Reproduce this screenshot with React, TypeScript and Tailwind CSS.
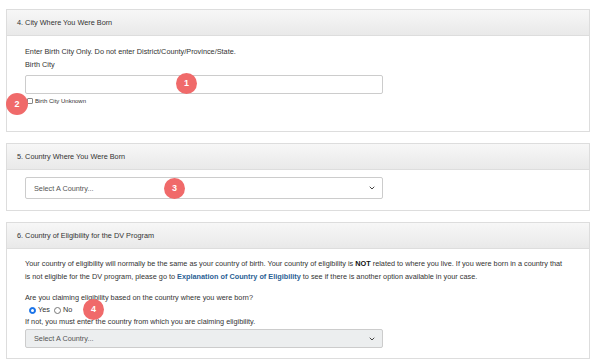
import { ChevronDown } from 'lucide-react'

function Badge({ n, className }: { n: number; className: string }) {
  return (
    <div
      className={`absolute w-[21px] h-[21px] rounded-full bg-[#f06a6a] text-white text-[9px] font-bold flex items-center justify-center ${className}`}
    >
      {n}
    </div>
  )
}

function Panel({ title, children, className = '' }: { title: string; children: React.ReactNode; className?: string }) {
  return (
    <div className={`relative border border-[#dddddd] bg-white ${className}`}>
      <div className="h-[26px] flex items-center px-[10px] bg-gradient-to-b from-[#f7f7f7] to-[#e9e9e9] border-b border-[#dddddd] text-[#333333]">
        {title}
      </div>
      {children}
    </div>
  )
}

function Select({ disabled = false }: { disabled?: boolean }) {
  return (
    <div
      className={`w-[358px] flex items-center justify-between pl-[8px] pr-[6px] border border-[#cccccc] rounded-[2px] text-[#555555] ${
        disabled ? 'h-[19px] bg-[#eceeef]' : 'h-[22px] bg-white'
      }`}
    >
      <span>Select A Country...</span>
      <ChevronDown className="w-[8px] h-[8px] text-[#444444]" strokeWidth={3} />
    </div>
  )
}

export default function App() {
  return (
    <div className="w-[600px] h-[360px] overflow-hidden bg-white pl-[6px] pr-[10px] pt-[9px] text-[7.3px] leading-[13px] text-[#333333] [font-family:'Liberation_Sans',Arial,sans-serif]">
      {/* 4. City */}
      <Panel title="4. City Where You Were Born" className="h-[123px]">
        <div className="pl-[18px] pt-[9px]">
          <p>Enter Birth City Only. Do not enter District/County/Province/State.</p>
          <p>Birth City</p>
          <div className="mt-[4px] w-[358px] h-[19px] border border-[#cccccc] rounded-[2px] bg-white" />
          <label className="mt-[2px] flex items-center gap-[2px] pl-[2px] text-[6px] leading-[10px]">
            <span className="w-[6px] h-[6px] border border-[#888888] rounded-[1px] bg-white" />
            Birth City Unknown
          </label>
        </div>
        <Badge n={1} className="left-[169px] top-[63px]" />
        <Badge n={2} className="left-[-1px] top-[83px] w-[22px] h-[22px]" />
      </Panel>

      {/* 5. Country */}
      <Panel title="5. Country Where You Were Born" className="mt-[11px] h-[68px]">
        <div className="pl-[18px] pt-[7px]">
          <Select />
        </div>
        <Badge n={3} className="left-[157px] top-[34px]" />
      </Panel>

      {/* 6. Eligibility */}
      <Panel title="6. Country of Eligibility for the DV Program" className="mt-[11px] h-[137px]">
        <div className="pl-[18px] pr-[24px] pt-[8px]">
          <p>
            Your country of eligibility will normally be the same as your country of birth. Your country of eligibility is{' '}
            <b className="text-[#111111]">NOT</b> related to where you live. If you were born in a country that is not eligible
            for the DV program, please go to{' '}
            <a className="font-bold text-[#2b5f94]">Explanation of Country of Eligibility</a> to see if there is another option
            available in your case.
          </p>
          <p className="mt-[8px]">Are you claiming eligibility based on the country where you were born?</p>
          <div className="flex items-center gap-[2px] pl-[4px] leading-[12px]">
            <span className="w-[7px] h-[7px] rounded-full bg-[#1a73e8] border border-[#1a73e8] flex items-center justify-center">
              <span className="w-[3px] h-[3px] rounded-full bg-white" />
            </span>
            <span className="mr-[2px]">Yes</span>
            <span className="w-[7px] h-[7px] rounded-full border border-[#777777] bg-white" />
            <span>No</span>
          </div>
          <p className="leading-[12px]">If not, you must enter the country from which you are claiming eligibility.</p>
          <div className="mt-[1px]">
            <Select disabled />
          </div>
        </div>
        <Badge n={4} className="left-[76px] top-[76px]" />
      </Panel>
    </div>
  )
}
